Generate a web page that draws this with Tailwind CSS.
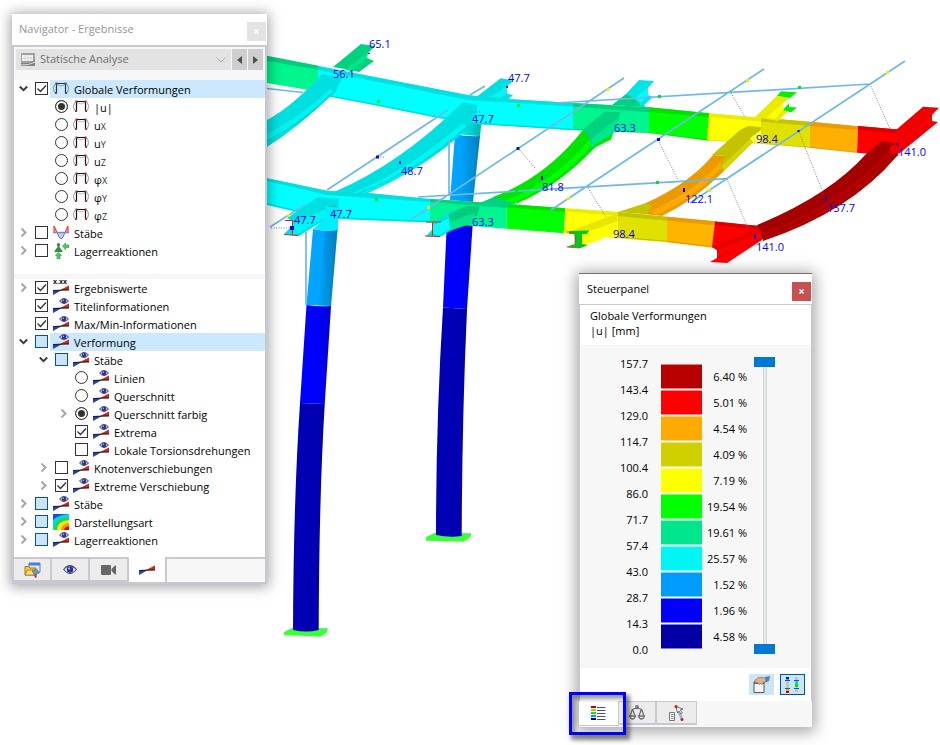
<!DOCTYPE html>
<html lang="de">
<head>
    <meta charset="UTF-8">
    <meta name="viewport" content="width=device-width, initial-scale=1">
    <title>Statische Analyse - Globale Verformungen</title>
    <script src="https://cdn.jsdelivr.net/npm/@tailwindcss/browser@4"></script>
</head>
<body class="bg-white font-['Open_Sans','Noto_Sans',sans-serif] text-[11px] text-black">
    <!-- Icon library -->
    <svg class="hidden" aria-hidden="true">
        <defs>
            <symbol id="i-frame" viewBox="0 0 16 16">
                <path d="M2.500 2.500Q-1.500 7.500 2.500 12.500M13.500 2.500Q17.500 7.500 13.500 12.500" fill="none" stroke="#9a9a9a"/>
                <path d="M3.500 12V2.500H12.500V12" fill="none" stroke="#111" stroke-width="1.200"/>
                <path d="M4 3.500Q8 6.500 12 3.500" fill="none" stroke="#b4b4b4"/>
                <path d="M2.500 1.500h2v2h-2zM11.500 1.500h2v2h-2zM2 11h2v2H2zM12 11h2v2h-2z" fill="#a8323c"/>
            </symbol>
            <symbol id="i-frame-blue" viewBox="0 0 16 16">
                <path d="M2.500 2.500Q-1.500 7.500 2.500 12.500M13.500 2.500Q17.500 7.500 13.500 12.500" fill="none" stroke="#7890aa"/>
                <path d="M3.500 12V2.500H12.500V12" fill="none" stroke="#1d3550" stroke-width="1.200"/>
                <path d="M4 3.500Q8 6.500 12 3.500" fill="none" stroke="#7f9fbd"/>
                <path d="M2.500 1.500h2v2h-2zM11.500 1.500h2v2h-2zM2 11h2v2H2zM12 11h2v2h-2z" fill="#5e466e"/>
            </symbol>
            <symbol id="i-member" viewBox="0 0 16 16">
                <path d="M4 7.500h8L10 12l-2 2-2-2z" fill="#c5caff" stroke="#5d68e8"/>
                <path d="M1 7.500V1l3 6.500zM15 7.500V1l-3 6.500z" fill="#ffb0b0" stroke="#ff2020"/>
                <path d="M0 7.500h16" stroke="#7d8f9a" stroke-width="1.500"/>
            </symbol>
            <symbol id="i-support" viewBox="0 0 16 16">
                <path d="M4 1q1.500-2 3 0v2l-1 .5L9.500 8v1h-8V8L5 3.500 4 3z" fill="#2f8f45"/>
                <path d="M9.500 3l3-3v2H16v2.500h-3.500v2zM5.500 9.500l3 3h-1.500V16H4v-3.500H2.500z" fill="#49cf62" stroke="#2b8a3f" stroke-width=".6"/>
            </symbol>
            <symbol id="i-bar" viewBox="0 0 16 16">
                <path d="M0 10h9L0 15z" fill="#2440b8"/>
                <path d="M7 10L16 5.500V10z" fill="#d8230f"/>
                <path d="M0 10.500L16 9.800" stroke="#222" stroke-width="1.200"/>
            </symbol>
            <symbol id="i-bar-eye" viewBox="0 0 16 16">
                <use href="#i-bar"/>
                <path d="M6.500 3Q11-2 15.500 3 11 8 6.500 3z" fill="#c8cce6" stroke="#44456f" stroke-width="1"/>
                <circle cx="11" cy="3" r="2.300" fill="#2b3192"/>
                <circle cx="10.400" cy="2.300" r=".7" fill="#b9c4ff"/>
            </symbol>
            <symbol id="i-bar-value" viewBox="0 0 16 16">
                <use href="#i-bar"/>
                <text x="0" y="4" font-size="7" font-weight="700" fill="#222">x.xx</text>
            </symbol>
            <symbol id="i-eye" viewBox="0 0 16 12">
                <path d="M.8 6Q8-3 15.200 6 8 15 .8 6z" fill="#f0f2fb" stroke="#44456f" stroke-width="1.300"/>
                <circle cx="8" cy="6" r="3.700" fill="#2b3192"/>
                <circle cx="7" cy="4.800" r="1.200" fill="#b9c4ff"/>
            </symbol>
            <symbol id="i-map" viewBox="0 0 16 16">
                <path d="M0 0h16v16H0z" fill="#1450e6"/>
                <path d="M0 16V6Q5 1 16 0V16z" fill="#00d8e8"/>
                <path d="M1 16Q1 4 16 3V16z" fill="#1fd84a"/>
                <path d="M4 16Q4 7 16 6V16z" fill="#f2ea10"/>
                <path d="M8 16Q8 10 16 9V16z" fill="#f59a10"/>
                <path d="M11 16Q11 13 16 12V16z" fill="#c81414"/>
            </symbol>
            <symbol id="i-down" viewBox="0 0 9 9"><path d="M.8 2.500l3.700 3.700 3.700-3.700" fill="none" stroke="#3a3a3a" stroke-width="1.900"/></symbol>
            <symbol id="i-right" viewBox="0 0 9 9"><path d="M2.500.5l4 4-4 4" fill="none" stroke="#a3a3a3" stroke-width="1.900"/></symbol>
        </defs>
    </svg>

    <main class="relative min-h-screen w-full overflow-hidden">
        <!-- Deformed structure -->
        <svg class="absolute left-0 top-0" width="940" height="745" viewBox="0 0 940 745" role="img" aria-label="Verformtes Tragwerk">
            <defs>
                <linearGradient id="round" x1="0" x2="1">
                    <stop offset="0" stop-color="#000" stop-opacity="0"/>
                    <stop offset=".4" stop-color="#000" stop-opacity=".02"/>
                    <stop offset="1" stop-color="#000" stop-opacity=".25"/>
                </linearGradient>
            </defs>

            <!-- Column bases -->
            <path d="M284 632l9-4.500 34.700.8-.5 4-7 4.500-12-.7-24-.8zM426 537l9-4.300 36 .6v3l-7 5.500-38-1z" fill="#3cff3c"/>

            <!-- Columns -->
            <g id="columns">
                <path d="M455 120h27l-2 16-25-2z" fill="#00f0f0"/>
                <path d="M455 134q12 3 25 2l-7 66-23-2z" fill="#00a5ff"/>
                <path d="M447 220h26l-6 89-24-1.500z" fill="#0000ff"/>
                <path d="M443 307.500l24 1.500Q462 420 461.700 536q-12 2-25.700-1Q436 420 443 307.500z" fill="#0000b4"/>
                <path d="M313 229q12 3 24.500 1L331 306l-24.500-1z" fill="#00a5ff"/>
                <path d="M306.500 305q12 2 24.500 1l-6.300 98-24.700-1z" fill="#0000ff"/>
                <path d="M300 403l24.700 1Q319 500 318.700 630q-12 3-25.700 0Q293.500 500 300 403z" fill="#0000b4"/>
            </g>
            <path d="M455 125l26-3-1 14-7 66-6 107Q462 420 461.700 536H449Q449 420 455 308z" fill="url(#round)"/>
            <path d="M325 229h12.500L331 306l-6.300 98Q319 500 318.700 630H306Q307 500 313 403l6-98z" fill="url(#round)"/>

            <!-- Rear girder: web, then top flange -->
            <path d="M267 59l51 10 3 23-54-9z" fill="#00f58c"/>
            <path d="M267 55.700L320 66v4l-53-9z" fill="#00cd7d"/>
            <path d="M318 66l150 29 32 3.500 73 4.500v27l-93-6-40-6-60-12-62-13z" fill="#0ff"/>
            <path d="M318 66l150 29.300 32 3.200 73 4.500v3.500l-73-4.500-32-2-150-30z" fill="#00e0e0"/>
            <path d="M330 96l50 9.500 60 12 40 6 93 6" fill="none" stroke="#00dcdc" stroke-width="1.500"/>
            <path d="M573 103l76 4.300V133l-76-3z" fill="#00f591"/>
            <path d="M573 103l76 4.300v5l-76-5.500z" fill="#00d282"/>
            <path d="M649 107.300l60 6v27.400l-60-7.700z" fill="#0f0"/>
            <path d="M649 107.300l60 6v3.700l-60-5z" fill="#00e100"/>
            <path d="M709 113.300l52 4.400v26l-54-3.400z" fill="#ff0"/>
            <path d="M709 113.300l52 4.400v4l-52-5z" fill="#ebeb00"/>
            <path d="M761 117.700l49 4v26l-49-4z" fill="#e1e100"/>
            <path d="M761 117.700l49 4v4.300l-49-4.300z" fill="#c3c300"/>
            <path d="M810 121.700l48 4.500-1 26.500-47-5z" fill="#ffaf00"/>
            <path d="M810 121.700l48 4.500v4L810 126z" fill="#eb9b00"/>
            <path d="M858 126l40 3.500V156l-41-3.300z" fill="#f00"/>
            <path d="M858 126l40 3.500v4l-40-3.500z" fill="#dc0000"/>
            <path d="M573 129.500l76 3.500 60 7M707 140l54 3.500 49 4 47 5" fill="none" stroke="#000" stroke-opacity=".12"/>

            <!-- Girder stubs behind the rear girder -->
            <path d="M333 67l28-23 14 2-7 7-1 5 7 3-15 11-14-3z" fill="#00d27d"/>
            <path d="M345 70l22-17v5l-16 13z" fill="#00e68c"/>
            <path d="M475 98l25.700-19.700L513 80.700l-6 6v7l6 1.300-5 4.500z" fill="#00e0e0"/>
            <path d="M489 97l18-11v7l-6 5z" fill="#00f5f5"/>
            <path d="M612 105l14-11 13 1 6 12z" fill="#00d282"/>
            <path d="M626 94l13-14 15 1-6 7v7l5 2-11 10-8-9z" fill="#00e6e6"/>
            <path d="M635 98l13-10v7l-7 8z" fill="#0ff"/>
            <path d="M755 117l22-21.300 13 2.300-7 5v7l5 1-10 10z" fill="#ebeb00"/>
            <path d="M767 117l16-14v7l-8 9z" fill="#ff0"/>
            <path d="M777 95.700l4-4.400 16 1-7 5.700zM783 110l6-7v4l8 .5-6 5z" fill="#00f000"/>

            <!-- Front girder -->
            <path d="M267 178.300L328 191l42 2.300 60 5.700v23.500l-92-3.500-45-8-26-6z" fill="#0ff"/>
            <path d="M267 178.300L328 191l42 2.300 60 5.700v3l-103-7-60-14z" fill="#00dede"/>
            <path d="M267 204l26 6 45 8 92 3.500" fill="none" stroke="#00dcdc" stroke-width="1.500"/>
            <path d="M430 199l76.700 5v24.700L430 222.500z" fill="#00f591"/>
            <path d="M430 199l76.700 5v4L430 202z" fill="#00d282"/>
            <path d="M506.700 204l58.500 4.300-1.500 25-57-4.600z" fill="#0f0"/>
            <path d="M506.700 204l58.500 4.300v3.500l-58.500-4.500z" fill="#00e100"/>
            <path d="M565.500 208.300l52.500 3.700v26.500l-54-5z" fill="#ff0"/>
            <path d="M565.500 208.300l52.500 3.700v4l-52.500-4.500z" fill="#ebeb00"/>
            <path d="M618 212l49 4.700v25.600l-49-4z" fill="#e1e100"/>
            <path d="M618 212l49 4.700v4l-49-4.700z" fill="#c3c300"/>
            <path d="M667 216.700l48 4.500-2 26.500-46-5.400z" fill="#ffb400"/>
            <path d="M667 216.700l48 4.500v4l-48-4.500z" fill="#eb9b00"/>
            <path d="M618 237l49 4.300 46 5.500" fill="none" stroke="#000" stroke-opacity=".15"/>

            <!-- Cross beam 1 -->
            <path d="M267 120Q293 106 322 74l20 4-6 13-7 6Q300 126 267 147z" fill="#00e0e0"/>
            <path d="M267 134Q300 117 330 89l3 2Q303 122 267 140z" fill="#00f2f2"/>
            <path d="M267 141Q303 122 336 91" fill="none" stroke="#00c8c8"/>
            <!-- Cross beam 2 -->
            <path d="M334 192Q400 164 463 102l15 3-3 13-18 20Q420 170 368 193z" fill="#00e0e0"/>
            <path d="M353 193Q412 168 461 124l6 1Q422 170 364 193z" fill="#00f5f5"/>
            <path d="M357 194Q420 170 467 127" fill="none" stroke="#00c8c8"/>
            <path d="M318 197l21 2-1 14-9 4-30 19-15-2 8-8v-5l-5-3z" fill="#00e0e0"/>
            <path d="M293 224l40-18v7l-34 20-6 1z" fill="#00f5f5"/>
            <path d="M326 206q6 3 12 0v24q-12 2-24.500-1l12-12z" fill="#0ef"/>
            <path d="M285 220.500h8M292.500 221v13.500M284 234.500l14 1" fill="none" stroke="#e02020"/>
            <!-- Cross beam 3 -->
            <path d="M480 203l16-7q8 3 22 7l-12 3z" fill="#00d282"/>
            <path d="M493 197Q545 178 583 130l22-18 15 .5-9 27-16 8Q560 185 518 203z" fill="#00e600"/>
            <path d="M505 201Q553 183 592 137l3 4Q560 183 513 203z" fill="#0f0"/>
            <path d="M583 130l22-18.500 15 .5-5 19-24 16-2-10z" fill="#00d282"/>
            <path d="M592 138l26-20-3 14-24 15z" fill="#00e68c"/>
            <path d="M433 223l18-12 20-4v16l-21 8-10 6-14-1 7-7z" fill="#00e0e0"/>
            <path d="M433 225l17-7v11l-11 6-6-1z" fill="#0ff"/>
            <path d="M449 214l17-8 14 .5-3 9-27 14z" fill="#00cd7d"/>
            <path d="M450 222l24-9v10l-24 7z" fill="#00e68c"/>
            <path d="M426 222h15M432.500 222.500v13M425 236l15 .5" fill="none" stroke="#e02020"/>
            <!-- Cross beam 4 -->
            <path d="M618 212l34-11 3 14z" fill="#c3c300"/>
            <path d="M646 203Q690 183 713 155l14 1-3 15Q695 200 662 216l-15-2 5-8z" fill="#eb9b00"/>
            <path d="M650 211Q695 192 720 162l2 5Q695 198 656 215z" fill="#ffa800"/>
            <path d="M712 155l28-25 8-4 13 1-1 11-9 6-26 26-6-2 7-12z" fill="#c3c300"/>
            <path d="M722 166l32-31 5 3-9 7-25 24z" fill="#d7d700"/>
            <path d="M750 138l11-8v13l-8-1z" fill="#ffff30"/>
            <path d="M571 231l46-17.500 1 10-18 16-19 6.500z" fill="#e6e600"/>
            <path d="M581 234l37-13v8l-18 11-19 6z" fill="#ff0"/>
            <path d="M569 231l20-.5-2 3.500h-5v10l6 1-7 3-15-1 9-3v-10h-6z" fill="#00c81e"/>
            <path d="M566 232h8M575 234v10M567 247l13 1" fill="none" stroke="#e02020" stroke-opacity=".7"/>
            <!-- Cross beam 5 -->
            <path d="M715 221.500l53 5.500-6 13-35 23-17-1 7-4v-8l-5-3z" fill="#f00"/>
            <path d="M715 221.500l53 5.500-7 3-46-5z" fill="#dc0000"/>
            <path d="M712 247l40-16 16-3-7 5-44 17z" fill="#e60000"/>
            <path d="M717 258l44-19" stroke="#d20000"/>
            <path d="M757 225Q830 195 867 153l15-12 15 3v12Q850 212 763 241l-2-10z" fill="#a50000"/>
            <path d="M761 233Q840 206 888 150l3 2v6Q845 214 763 240z" fill="#b40000"/>
            <path d="M762 237Q845 208 893 152" fill="none" stroke="#8c0000"/>
            <path d="M896 130l27-23.300 16 1-7 7.300v6l6 1-38 31-10 1v-7l8-3z" fill="#f00000"/>
            <path d="M890 149l42-33v5l-40 32z" fill="#f00"/>
            <path d="M890 152l42-31" stroke="#d20000"/>

            <!-- Undeformed system -->
            <path d="M267 88.500l36 4M327 190l121-80M270 227l36-23M449 138v57M412 219L624 78M418 197l309-18.300M556 103l314-19M551 210L764 69M690 203L905 61M470 95l15-9M306 232v73" fill="none" stroke="#6cb8ea" stroke-width="1.700"/>
            <path d="M518 148l17 20M588 188l18 29M658 140l20 40M731 93l14 24M870 84l20 45M799 132l23 58M727 179l21 49M271 228h20M378 157h6M338 207l-10-1M469 112h12" fill="none" stroke="#808080" stroke-dasharray="1 1.500"/>
            <path d="M377 100h3v3h-3zM375 198h3v3h-3zM517 104h3v3h-3zM658 95h3v3h-3zM515 190h3v3h-3zM656 181h3v3h-3zM798 86h3v3h-3z" fill="#00e61e"/>
            <path d="M606 88h3v3h-3zM567 197h3v3h-3zM746 79h3v3h-3zM708 189h3v3h-3zM886 71h3v3h-3zM287 214h3v3h-3zM427 206h3v3h-3z" fill="#e6f000"/>
            <path d="M376 155.500h3v3h-3zM399 161h2v3h-2zM516.500 147h3v3h-3zM657 138h3v3h-3zM797.500 130h2v2h-2zM541 176h2v4h-2zM683 188h2v4h-2zM825 197h2v4h-2zM896 143h2v2h-2zM754 235h2v4h-2zM290 226h4v4h-4zM506 86h2v2h-2zM368 53h2v1h-2z" fill="#0a0ad2"/>
            <g id="values" font-size="11" fill="#0000eb"></g>
        </svg>

        <!-- Navigator window -->
        <section class="absolute left-3 top-3.5 flex w-[255px] flex-col bg-white shadow-[0_1px_12px_2px_rgba(0,0,0,0.35)]">
            <header class="flex h-[31px] items-center justify-between pl-[7px] pr-px">
                <h2 class="text-[#969696]">Navigator - Ergebnisse</h2>
                <button class="mt-1 flex size-[19px] items-center justify-center bg-[#e3e3e3]" aria-label="Schließen">
                    <svg width="5" height="5" viewBox="0 0 5 5"><path d="M.5.500l4 4m0-4l-4 4" stroke="#fff" stroke-width="1.400"/></svg>
                </button>
            </header>
            <div class="border-2 border-[#c8c8d4] bg-[#f7f7f7]">
                <div class="flex h-[33px] gap-px px-0.5 pb-[10px] pt-0.5 text-[#6e6e6e]">
                    <div class="flex flex-1 items-center bg-[#e3e3e3] pl-[5px] pr-1">
                        <svg class="size-3.5 shrink-0" viewBox="0 0 14 14">
                            <path d="M0 0h14v13H0z" fill="#a0a0a0"/><path d="M1 2h11v6H1z" fill="#f4f4f4"/>
                            <path d="M0 10Q8 11 14 7v6H0z" fill="#808080"/><path d="M0 12Q8 12.500 14 9" fill="none" stroke="#ddd"/><path d="M4 2v6M7 2v6M10 2v6M1 5h11" stroke="#ccc" stroke-width=".7"/>
                        </svg>
                        <select class="h-[21px] flex-1 appearance-none bg-transparent pl-[5px] text-[11px] outline-none" aria-label="Analyse">
                            <option>Statische Analyse</option>
                        </select>
                        <svg class="pointer-events-none h-2 w-3" viewBox="0 0 12 8"><path d="M1.500 1.500L6 6l4.500-4.500" fill="none" stroke="#aaa"/></svg>
                    </div>
                    <button class="flex w-[15px] items-center justify-center bg-[#cecece]" aria-label="Zurück">
                        <svg width="5" height="8" viewBox="0 0 5 8"><path d="M5 0v8L0 4z" fill="#505050"/></svg>
                    </button>
                    <button class="flex w-[15px] items-center justify-center bg-[#cecece]" aria-label="Weiter">
                        <svg width="5" height="8" viewBox="0 0 5 8"><path d="M0 0v8l5-4z" fill="#505050"/></svg>
                    </button>
                </div>
                <div id="resultTree" class="h-[194px] bg-white"></div>
                <div id="displayTree" class="mt-[5px] h-[278px] bg-white"></div>
            </div>
            <nav class="-mt-0.5 flex h-[27px] items-start border-2 border-[#c8c8d4] bg-[#f7f7f7]">
                <button class="flex h-[23px] w-[38px] items-center justify-center border-b-2 border-r-2 border-[#c8c8d4] bg-[#ececec]" aria-label="Daten">
                    <svg width="17" height="16" viewBox="0 0 17 16">
                        <path d="M5 1h11v9H5z" fill="#dce9fa" stroke="#4680d2"/><path d="M5 1h11v2.500H5z" fill="#4680d2"/>
                        <path d="M1 4.500h4l1 1.500h6V13H1z" fill="#f5c83c" stroke="#a07814"/><path d="M3.500 8H14L11.500 13H1z" fill="#ffe078" stroke="#a07814" stroke-width=".8"/>
                        <path d="M8 9l4-1.500 3.500 3.500-3.500 1v3l-2-1v-2z" fill="#6e9bbe" stroke="#46647d" stroke-width=".6"/><path d="M11 12h1.500v4H11z" fill="#e03c1e"/>
                    </svg>
                </button>
                <button class="flex h-[23px] w-[38px] items-center justify-center border-b-2 border-r-2 border-[#c8c8d4] bg-[#ececec]" aria-label="Zeigen">
                    <svg width="14" height="11"><use href="#i-eye"/></svg>
                </button>
                <button class="flex h-[23px] w-[37px] items-center justify-center border-b-2 border-[#c8c8d4] bg-[#ececec]" aria-label="Ansichten">
                    <svg width="15" height="10" viewBox="0 0 15 10"><path d="M1 0h8q1 0 1 1v8q0 1-1 1H1q-1 0-1-1V1q0-1 1-1zM10.500 4L14 .5h1v9h-1L10.500 6z" fill="#666"/></svg>
                </button>
                <button class="-mt-0.5 flex h-[25px] w-10 items-center justify-center border-x-2 border-[#c8c8d4] bg-white" aria-label="Ergebnisse">
                    <svg class="size-4" viewBox="0 2 16 16"><use href="#i-bar" width="16" height="16"/></svg>
                </button>
            </nav>
        </section>

        <!-- Control panel window -->
        <section class="absolute left-[579px] top-[273px] flex w-[233px] flex-col border-t border-[#6e6e6e] bg-white shadow-[0_2px_14px_3px_rgba(0,0,0,0.35)]">
            <header class="flex h-[30px] items-center justify-between pl-2 pr-px">
                <h2>Steuerpanel</h2>
                <button class="mt-1 flex size-[19px] items-center justify-center bg-[#c75050]" aria-label="Schließen">
                    <svg width="5" height="5" viewBox="0 0 5 5"><path d="M.5.500l4 4m0-4l-4 4" stroke="#fff" stroke-width="1.400"/></svg>
                </button>
            </header>
            <div class="border-x border-t border-[#c8c8d4]">
                <div class="h-10 pl-[10px] pt-[3px] leading-[15px]">
                    <p>Globale Verformungen</p>
                    <p>|u| [mm]</p>
                </div>
                <div class="flex h-[323px] items-start bg-[#f7f7f7] pt-[6px]">
                    <div id="limits" class="w-[68px] text-right leading-[26px]"></div>
                    <div id="swatches" class="ml-[13px] mt-[13px] flex w-[41px] flex-col gap-px bg-white"></div>
                    <div id="shares" class="mt-[13px] w-[45px] text-right leading-[26px]"></div>
                    <div class="ml-[7px] mt-[6px] grid h-[297px] w-[21px]">
                        <div class="col-start-1 row-start-1 w-1 justify-self-center border-x border-[#d2d6d6] bg-[#e6eaea]"></div>
                        <input type="range" min="0" max="100" value="100" aria-label="Obergrenze" class="pointer-events-none col-start-1 row-start-1 h-[297px] w-[21px] appearance-none bg-transparent [direction:rtl] [writing-mode:vertical-lr] [&::-webkit-slider-thumb]:pointer-events-auto [&::-webkit-slider-thumb]:h-[10px] [&::-webkit-slider-thumb]:w-[21px] [&::-webkit-slider-thumb]:appearance-none [&::-webkit-slider-thumb]:bg-[#0078d7]">
                        <input type="range" min="0" max="100" value="0" aria-label="Untergrenze" class="pointer-events-none col-start-1 row-start-1 h-[297px] w-[21px] appearance-none bg-transparent [direction:rtl] [writing-mode:vertical-lr] [&::-webkit-slider-thumb]:pointer-events-auto [&::-webkit-slider-thumb]:h-[10px] [&::-webkit-slider-thumb]:w-[21px] [&::-webkit-slider-thumb]:appearance-none [&::-webkit-slider-thumb]:bg-[#0078d7]">
                    </div>
                </div>
                <div class="flex h-[33px] items-start justify-end gap-1.5 pr-1.5 pt-1.5">
                    <button class="flex h-[21px] w-[25px] items-center justify-center bg-[#cce4f7]" aria-label="Optionen">
                        <svg width="17" height="17" viewBox="0 0 17 17">
                            <path d="M1 6h10v10.500H1z" fill="#f5f5f5" stroke="#555"/><path d="M1 6h10v2H1z" fill="#666"/>
                            <path d="M2 4Q5 .5 9 1.500l4 .5v4l-3 .5-1 2-1.500-1L6 8.500 4.500 6.500 2 7z" fill="#dcb48c" stroke="#8c6e50" stroke-width=".7"/>
                            <path d="M12 1l5-1-1 5-3 1.500z" fill="#4b82c3"/>
                        </svg>
                    </button>
                    <button class="flex h-[21px] w-[25px] items-center justify-center border border-[#005499] bg-[#cce4f7]" aria-label="Farbskala">
                        <svg width="17" height="17" viewBox="0 0 17 17">
                            <path d="M2 1h3v15H2zM11 1h3v15h-3z" fill="#c3c3c3"/><path d="M2 1h3v2H2z" fill="#0014a0"/><path d="M2 3h3v1H2z" fill="#0af"/>
                            <path d="M2 13h3v2H2z" fill="#ffa000"/><path d="M2 15h3v2H2z" fill="#c80000"/>
                            <path d="M11 5h3v3h-3z" fill="#00dceb"/><path d="M11 8h3v3h-3z" fill="#00dc1e"/><path d="M11 11h3v1h-3z" fill="#e6e600"/>
                            <path d="M1 4.500h5M1 12.500h5M10 4.500h5M10 12.500h5" stroke="#005fb4" stroke-width="1.200"/>
                        </svg>
                    </button>
                </div>
            </div>
            <nav class="flex h-[26px] items-start bg-[#f7f7f7]">
                <button class="flex h-[25px] w-10 items-center justify-center border-b border-r border-[#c8c8d4] bg-white" aria-label="Farbskala">
                    <svg width="15" height="15" viewBox="0 0 15 15">
                        <path d="M0 0h5v2H0z" fill="#b40000"/><path d="M0 3h5v2H0z" fill="#ffa500"/><path d="M0 6h5v2H0z" fill="#00f000"/>
                        <path d="M0 9h5v2H0z" fill="#009bff"/><path d="M0 12h5v2H0z" fill="#0000a0"/>
                        <path d="M6 1.500h8.500M6 4.500h8.500M6 7.500h8.500M6 10.500h8.500M6 13.500h8.500" stroke="#555"/>
                    </svg>
                </button>
                <button class="flex h-6 w-[38px] items-center justify-center border-b-2 border-r-2 border-t border-[#c8c8d4] bg-[#ececec]" aria-label="Faktoren">
                    <svg width="16" height="16" viewBox="0 0 16 16" fill="none" stroke="#707070" stroke-width="1.300">
                        <path d="M8 1v3M3 5Q5 3 8 3.500 11 3 13 5M3.500 4L1 11M3.500 4L6 11M12.500 4L10 11M12.500 4L15 11"/>
                        <circle cx="8" cy="2" r="1.300"/><path d="M.5 11h6q-1 3-3 3t-3-3zM9.500 11h6q-1 3-3 3t-3-3z"/>
                    </svg>
                </button>
                <button class="flex h-6 w-10 items-center justify-center border-b-2 border-r border-t border-[#c8c8d4] bg-[#ececec]" aria-label="Filter">
                    <svg width="16" height="16" viewBox="0 0 16 16">
                        <path d="M7 1l6 13" stroke="#9bb4cd" stroke-width="2.500"/><path d="M.5 7.500h5v8h-5z" fill="#fff" stroke="#777"/><path d="M2 9.500h2.500M2 11.500h2.500M2 13.500h2.500" stroke="#777"/>
                        <path d="M7 1.500l7 2.500-3 1 2.500 3-1.500 1-2-3-1.500 2z" fill="#fff" stroke="#555" stroke-width=".8"/>
                        <circle cx="7" cy="1.500" r="1.500" fill="#c81e1e"/><circle cx="13" cy="14.500" r="1.500" fill="#c81e1e"/>
                    </svg>
                </button>
            </nav>
        </section>

        <!-- Marker around the first tab -->
        <div class="pointer-events-none absolute left-[569px] top-[692px] h-[43px] w-[57px] border-3 border-[#0000ff] shadow-[3px_4px_4px_1px_rgba(0,0,0,0.45),inset_3px_4px_4px_rgba(0,0,0,0.4)]"></div>
    </main>

    <script>
        const resultTree = [
            { level: 0, arrow: 'down', type: 'checkbox', checked: true, icon: 'frame-blue', label: 'Globale Verformungen', active: true },
            { level: 1, type: 'radio', checked: true, icon: 'frame', label: '|u|' },
            { level: 1, type: 'radio', icon: 'frame', label: 'u', axis: 'X' },
            { level: 1, type: 'radio', icon: 'frame', label: 'u', axis: 'Y' },
            { level: 1, type: 'radio', icon: 'frame', label: 'u', axis: 'Z' },
            { level: 1, type: 'radio', icon: 'frame', label: 'φ', axis: 'X' },
            { level: 1, type: 'radio', icon: 'frame', label: 'φ', axis: 'Y' },
            { level: 1, type: 'radio', icon: 'frame', label: 'φ', axis: 'Z' },
            { level: 0, arrow: 'right', type: 'checkbox', icon: 'member', label: 'Stäbe' },
            { level: 0, arrow: 'right', type: 'checkbox', icon: 'support', label: 'Lagerreaktionen' }
        ];

        const displayTree = [
            { level: 0, arrow: 'right', type: 'checkbox', checked: true, icon: 'bar-value', label: 'Ergebniswerte' },
            { level: 0, type: 'checkbox', checked: true, icon: 'bar-eye', label: 'Titelinformationen' },
            { level: 0, type: 'checkbox', checked: true, icon: 'bar-eye', label: 'Max/Min-Informationen' },
            { level: 0, arrow: 'down', type: 'checkbox', mixed: true, icon: 'bar-eye', label: 'Verformung', active: true },
            { level: 1, arrow: 'down', type: 'checkbox', mixed: true, icon: 'bar-eye', label: 'Stäbe' },
            { level: 2, type: 'radio', icon: 'bar-eye', label: 'Linien' },
            { level: 2, type: 'radio', icon: 'bar-eye', label: 'Querschnitt' },
            { level: 2, arrow: 'right', type: 'radio', checked: true, icon: 'bar-eye', label: 'Querschnitt farbig' },
            { level: 2, type: 'checkbox', checked: true, icon: 'bar-eye', label: 'Extrema' },
            { level: 2, type: 'checkbox', icon: 'bar-eye', label: 'Lokale Torsionsdrehungen' },
            { level: 1, arrow: 'right', type: 'checkbox', icon: 'bar-eye', label: 'Knotenverschiebungen' },
            { level: 1, arrow: 'right', type: 'checkbox', checked: true, icon: 'bar-eye', label: 'Extreme Verschiebung' },
            { level: 0, arrow: 'right', type: 'checkbox', mixed: true, icon: 'bar-eye', label: 'Stäbe' },
            { level: 0, arrow: 'right', type: 'checkbox', mixed: true, icon: 'map', label: 'Darstellungsart' },
            { level: 0, arrow: 'right', type: 'checkbox', mixed: true, icon: 'bar-eye', label: 'Lagerreaktionen' }
        ];

        const indent = ['pl-0', 'pl-5', 'pl-10'];

        function control(row, name) {
            if (row.type === 'radio') {
                return `<input type="radio" name="${name}" ${row.checked ? 'checked' : ''} class="size-[13px] appearance-none rounded-full border border-[#333] bg-white checked:bg-[#333] checked:shadow-[inset_0_0_0_2px_white]">`;
            }
            const look = row.mixed ? 'border-[#005499] bg-[#cce4f7]' : 'border-[#333] bg-white';
            return `<input type="checkbox" ${row.checked ? 'checked' : ''} class="peer col-start-1 row-start-1 size-[13px] appearance-none border ${look}">
                <svg class="pointer-events-none col-start-1 row-start-1 hidden size-[13px] peer-checked:block" viewBox="0 0 13 13"><path d="M2.500 6.500l3 3L11 3.500" fill="none" stroke="#333" stroke-width="1.300"/></svg>`;
        }

        function renderTree(id, rows) {
            document.getElementById(id).innerHTML = rows.map(row => `
                <label class="flex h-[18px] items-start ${indent[row.level]}">
                    <span class="flex h-[17px] w-5 items-center justify-center pr-px">
                        ${row.arrow ? `<svg class="size-[9px]"><use href="#i-${row.arrow}"/></svg>` : ''}
                    </span>
                    <span class="ml-px mr-0.5 mt-0.5 grid size-[13px]">${control(row, id)}</span>
                    <span class="flex h-full flex-1 items-center gap-[5px] whitespace-nowrap pl-[3px] leading-[18px] ${row.active ? 'bg-[#cce8ff]' : ''}">
                        <svg class="size-4 shrink-0"><use href="#i-${row.icon}"/></svg>
                        <span class="pt-0.5">${row.label}${row.axis ? `<span class="text-[9px] text-[#333]">${row.axis}</span>` : ''}</span>
                    </span>
                </label>
            `).join('');
        }

        renderTree('resultTree', resultTree);
        renderTree('displayTree', displayTree);

        // Colour scale
        const limits = ['157.7', '143.4', '129.0', '114.7', '100.4', '86.0', '71.7', '57.4', '43.0', '28.7', '14.3', '0.0'];
        const scale = [
            ['#b90000', '6.40'], ['#ff0000', '5.01'], ['#ffaa00', '4.54'], ['#d0d000', '4.09'],
            ['#ffff00', '7.19'], ['#00ff00', '19.54'], ['#00e68c', '19.61'], ['#00f5f5', '25.57'],
            ['#009bff', '1.52'], ['#0000ff', '1.96'], ['#0000a5', '4.58']
        ];
        document.getElementById('limits').innerHTML = limits.map(v => `<div>${v}</div>`).join('');
        document.getElementById('swatches').innerHTML = scale.map(([color]) =>
            `<div class="h-[25px] border-y border-white/50" style="background:${color}"></div>`).join('');
        document.getElementById('shares').innerHTML = scale.map(([, share]) => `<div>${share} %</div>`).join('');

        // Displacement values next to the members
        const values = [
            [369, 48, '65.1'], [333, 78, '56.1'], [472, 123, '47.7'], [401, 175, '48.7'], [294, 224, '47.7'],
            [330, 218, '47.7'], [472, 226, '63.3'], [508, 82, '47.7'], [614, 132, '63.3'], [542, 191, '81.8'],
            [613, 238, '98.4'], [685, 203, '122.1'], [756, 143, '98.4'], [898, 156, '141.0'], [827, 212, '157.7'],
            [756, 251, '141.0']
        ];
        document.getElementById('values').innerHTML = values.map(([x, y, v]) => `<text x="${x}" y="${y}">${v}</text>`).join('');
    </script>
</body>
</html>
